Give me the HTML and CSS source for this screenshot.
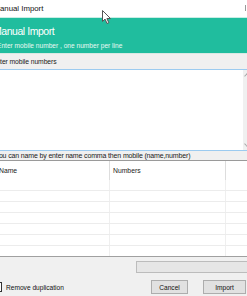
FILE: index.html
```html
<!DOCTYPE html>
<html>
<head>
<meta charset="utf-8">
<link rel="stylesheet" href="styles.css">
</head>
<body>
<div class="win">
  <div class="titlebar">
    <span class="title">Manual Import</span>
    <svg class="cursor" width="10" height="15" viewBox="0 0 10 15"><path d="M0.5 0.5 L0.5 11.5 L3 9 L5 13.5 L6.8 12.7 L4.9 8.5 L8.5 8.5 Z" fill="#fff" stroke="#555" stroke-width="1"/></svg>
    <span class="close"></span>
  </div>
  <div class="banner">
    <div class="b-title">Manual Import</div>
    <div class="b-sub">Enter mobile number , one number per line</div>
  </div>
  <div class="label l1">Enter mobile numbers</div>
  <div class="textbox">
    <div class="text-area"></div>
    <div class="vscroll">
      <span class="arr up"></span>
      <span class="arr down"></span>
    </div>
  </div>
  <div class="label l2">You can name by enter name comma then mobile (name,number)</div>
  <div class="grid">
    <div class="row head"><div class="c c1">Name</div><div class="c c2">Numbers</div><div class="c c3"></div></div>
    <div class="row"><div class="c c1"></div><div class="c c2"></div><div class="c c3"></div></div>
    <div class="row"><div class="c c1"></div><div class="c c2"></div><div class="c c3"></div></div>
    <div class="row"><div class="c c1"></div><div class="c c2"></div><div class="c c3"></div></div>
    <div class="row"><div class="c c1"></div><div class="c c2"></div><div class="c c3"></div></div>
    <div class="row"><div class="c c1"></div><div class="c c2"></div><div class="c c3"></div></div>
    <div class="row"><div class="c c1"></div><div class="c c2"></div><div class="c c3"></div></div>
    <div class="row"><div class="c c1"></div><div class="c c2"></div><div class="c c3"></div></div>
  </div>
  <div class="footer">
    <div class="progress-line"><div class="progress"></div></div>
    <div class="actions">
      <label class="check"><span class="box"></span><span>Remove duplication</span></label>
      <div class="buttons">
        <button class="btn cancel">Cancel</button>
        <button class="btn import">Import</button>
      </div>
    </div>
  </div>
</div>
</body>
</html>
```
FILE: styles.css
```css
html, body {
  margin: 0;
  padding: 0;
  width: 247px;
  height: 296px;
  overflow: hidden;
  background: #f0f0f0;
  font-family: "Liberation Sans", Arial, sans-serif;
  color: #1a1a1a;
}
.win {
  margin-left: -8px;
  width: 262px;
  height: 296px;
  display: flex;
  flex-direction: column;
}
.titlebar {
  position: relative;
  height: 17px;
  background: #fff;
  display: flex;
  align-items: center;
  padding-left: 1.5px;
}
.title {
  font-size: 7.8px;
  color: #111;
}
.cursor {
  position: absolute;
  left: 110px;
  top: 10px;
}
.close {
  position: absolute;
  left: 253px;
  top: 5px;
  width: 1px;
  height: 6px;
  background: #999;
}
.banner {
  height: 37px;
  box-sizing: border-box;
  background: #20bd9e;
  border-top: 1px solid #c8eee5;
  border-bottom: 1px solid #d9e9e4;
  color: #fff;
  padding: 7px 0 0 1px;
}
.b-title {
  font-size: 10.5px;
  line-height: 13px;
  letter-spacing: -0.45px;
}
.b-sub {
  font-size: 6.6px;
  line-height: 9px;
  margin-top: 3px;
  padding-left: 4px;
  color: #eaf8f3;
}
.label {
  color: #1a1a1a;
  white-space: nowrap;
}
.l1 {
  font-size: 6.8px;
  height: 15px;
  line-height: 15px;
  letter-spacing: -0.1px;
}
.textbox {
  height: 80px;
  border-top: 1px solid #9ccbf0;
  border-bottom: 1px solid #9ccbf0;
  background: #fff;
  display: flex;
}
.text-area {
  flex: 0 0 251px;
}
.vscroll {
  flex: 0 0 11px;
  background: #f0f0f0;
  position: relative;
}
.arr {
  position: absolute;
  left: 2px;
  width: 3px;
  height: 3px;
  border-left: 1px solid #a8a8a8;
}
.arr.up { top: 4px; border-top: 1px solid #a8a8a8; transform: rotate(45deg); }
.arr.down { bottom: 4px; border-bottom: 1px solid #a8a8a8; transform: rotate(-45deg); }
.l2 {
  font-size: 7px;
  height: 9px;
  line-height: 10px;
  padding-left: 3px;
  letter-spacing: -0.15px;
}
.grid {
  border-top: 1px solid #9a9a9a;
  border-bottom: 1px solid #a0a0a0;
  background: #fff;
  display: flex;
  flex-direction: column;
}
.row {
  display: flex;
  height: 10px;
  border-bottom: 1px solid #ececec;
}
.row:last-child {
  border-bottom: none;
}
.row.head {
  height: 19px;
  border-bottom: none;
  font-size: 6.8px;
  line-height: 19px;
  color: #1a1a1a;
}
.c {
  box-sizing: border-box;
  border-right: 1px solid #efefef;
}
.c1 { flex: 0 0 118px; padding-left: 7px; }
.c2 { flex: 0 0 116px; padding-left: 3px; }
.c3 { flex: 1; border-right: none; }
.head .c1, .head .c2 { border-right-color: #dddddd; }
.footer {
  flex: 1;
  display: flex;
  flex-direction: column;
}
.progress-line {
  display: flex;
  justify-content: flex-end;
  padding-top: 4px;
}
.progress {
  width: 116px;
  height: 10px;
  border: 1px solid #bcbcbc;
  background: #e6e6e6;
}
.actions {
  display: flex;
  align-items: center;
  justify-content: space-between;
  margin-top: 7px;
}
.check {
  display: flex;
  align-items: center;
  gap: 4px;
  font-size: 6.6px;
  color: #111;
}
.box {
  width: 8px;
  height: 8px;
  border: 1px solid #333;
  background: #fff;
}
.buttons {
  display: flex;
  gap: 15px;
  padding-right: 8px;
}
.btn {
  font-family: "Liberation Sans", Arial, sans-serif;
  font-size: 6.6px;
  height: 14px;
  padding: 0;
  border: 1px solid #adadad;
  background: #e1e1e1;
  color: #111;
}
.cancel { width: 37px; }
.import { width: 43px; }
```
